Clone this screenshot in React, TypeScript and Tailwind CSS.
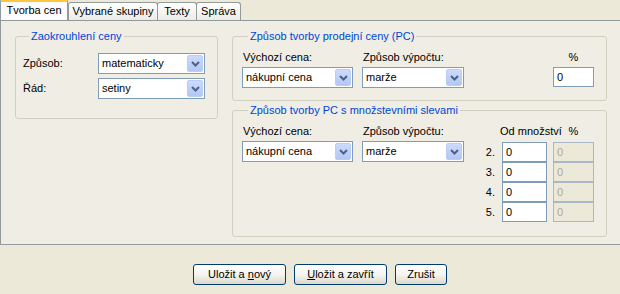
import React from "react";

const Chevron = () => (
  <svg width="9" height="6" viewBox="0 0 9 6" className="block">
    <path d="M1 1 L4.5 4.5 L8 1" fill="none" stroke="#4D6185" strokeWidth="2" />
  </svg>
);

function Combo({ value, className }: { value: string; className: string }) {
  return (
    <div className={`flex h-[21px] items-center border border-[#7F9DB9] bg-white ${className}`}>
      <span className="flex-1 truncate pl-[3px] leading-[13px]">{value}</span>
      <span className="mr-px flex h-[17px] w-[16px] items-center justify-center rounded-[2px] border border-[#B9CDF6] bg-gradient-to-b from-[#CCDAFD] to-[#B3C7F4]">
        <Chevron />
      </span>
    </div>
  );
}

function Input({ value, className, disabled }: { value: string; className: string; disabled?: boolean }) {
  return (
    <div
      className={`flex h-[20px] items-center border pl-[3px] leading-[13px] ${
        disabled ? "border-[#A9B8C9] bg-[#ECE9D8] text-[#ACA899]" : "border-[#7F9DB9] bg-white text-black"
      } ${className}`}
    >
      {value}
    </div>
  );
}

function Group({ title, className, children }: { title: string; className: string; children: React.ReactNode }) {
  return (
    <fieldset className={`rounded-[3px] border border-[#D0D0BF] ${className}`}>
      <legend className="ml-[6px] px-[2px] leading-[13px] text-[#0046D5]">{title}</legend>
      {children}
    </fieldset>
  );
}

function Button({ children, className }: { children: React.ReactNode; className: string }) {
  return (
    <button
      className={`flex h-[21px] items-center justify-center rounded-[3px] border border-[#003C74] bg-gradient-to-b from-[#FFFFFF] via-[#F5F4EF] to-[#DCD8CB] leading-[13px] text-black ${className}`}
    >
      {children}
    </button>
  );
}

export default function App() {
  return (
    <div className="h-[294px] w-[620px] overflow-hidden bg-[#ECE9D8] text-[11px] text-black" style={{ fontFamily: '"Liberation Sans", Arial, sans-serif' }}>
      {/* tab strip */}
      <div className="flex h-[20px] items-end">
        <div className="relative z-10 flex h-[21px] w-[68px] flex-col rounded-t-[3px] border-x border-[#919B9C] bg-[#FCFCFE]">
          <div className="h-[1px] rounded-t-[3px] bg-[#E68B2C]" />
          <div className="h-[2px] bg-[#FFC83C]" />
          <div className="flex flex-1 items-center justify-center pb-[2px] leading-[13px]">Tvorba cen</div>
        </div>
        <div className="flex h-[18px] w-[90px] items-center justify-center rounded-t-[3px] border border-b-0 border-[#919B9C] bg-gradient-to-b from-[#FFFFFF] to-[#ECEBE6] leading-[13px]">
          Vybrané skupiny
        </div>
        <div className="-ml-px flex h-[18px] w-[40px] items-center justify-center rounded-t-[3px] border border-b-0 border-[#919B9C] bg-gradient-to-b from-[#FFFFFF] to-[#ECEBE6] leading-[13px]">
          Texty
        </div>
        <div className="-ml-px flex h-[18px] w-[45px] items-center justify-center rounded-t-[3px] border border-b-0 border-[#919B9C] bg-gradient-to-b from-[#FFFFFF] to-[#ECEBE6] leading-[13px]">
          Správa
        </div>
      </div>

      {/* tab panel */}
      <div className="flex h-[225px] w-[622px] gap-[14px] border border-[#919B9C] bg-[#EFEDE4] pl-[14px] pt-[9px]">
        <Group title="Zaokrouhlení ceny" className="h-[89px] w-[203px] pl-[7px] pt-[10px]">
          <div className="flex h-[21px] items-center">
            <span className="w-[75px]">Způsob:</span>
            <Combo value="matematicky" className="w-[107px]" />
          </div>
          <div className="mt-[4px] flex h-[21px] items-center">
            <span className="w-[75px]">Řád:</span>
            <Combo value="setiny" className="w-[107px]" />
          </div>
        </Group>

        <div className="flex w-[375px] flex-col gap-[3px]">
          <Group title="Způsob tvorby prodejní ceny (PC)" className="h-[71px] pl-[9px] pr-[12px] pt-[8px]">
            <div className="flex">
              <div className="flex w-[120px] flex-col gap-[3px]">
                <span className="pl-[1px] leading-[13px]">Výchozí cena:</span>
                <Combo value="nákupní cena" className="w-[111px]" />
              </div>
              <div className="flex w-[102px] flex-col gap-[3px]">
                <span className="pl-[1px] leading-[13px]">Způsob výpočtu:</span>
                <Combo value="marže" className="w-[102px]" />
              </div>
              <div className="ml-auto flex w-[41px] flex-col items-center gap-[3px]">
                <span className="leading-[13px]">%</span>
                <Input value="0" className="w-[41px]" />
              </div>
            </div>
          </Group>

          <Group title="Způsob tvorby PC s množstevními slevami" className="h-[133px] pl-[9px] pr-[12px] pt-[8px]">
            <div className="flex">
              <div className="flex w-[120px] flex-col gap-[3px]">
                <span className="pl-[1px] leading-[13px]">Výchozí cena:</span>
                <Combo value="nákupní cena" className="w-[111px]" />
              </div>
              <div className="flex w-[102px] flex-col gap-[3px]">
                <span className="pl-[1px] leading-[13px]">Způsob výpočtu:</span>
                <Combo value="marže" className="w-[102px]" />
              </div>
              <div className="ml-auto grid grid-cols-[20px_45px_41px] gap-x-[6px]">
                <span />
                <span className="mb-[4px] whitespace-nowrap text-center leading-[13px] -ml-[2px]">Od množství</span>
                <span className="mb-[4px] text-center leading-[13px]">%</span>
                {["2.", "3.", "4.", "5."].map((n) => (
                  <React.Fragment key={n}>
                    <span className="flex h-[20px] items-center justify-end pr-[1px]">{n}</span>
                    <Input value="0" className="w-[45px]" />
                    <Input value="0" className="w-[41px]" disabled />
                  </React.Fragment>
                ))}
              </div>
            </div>
          </Group>
        </div>
      </div>

      {/* buttons */}
      <div className="flex gap-[8px] pl-[193px] pt-[19px]">
        <Button className="w-[93px]">
          <span>
            Uložit a <span className="underline">n</span>ový
          </span>
        </Button>
        <Button className="w-[93px]">
          <span>
            <span className="underline">U</span>ložit a zavřít
          </span>
        </Button>
        <Button className="w-[52px]">Zrušit</Button>
      </div>
    </div>
  );
}
